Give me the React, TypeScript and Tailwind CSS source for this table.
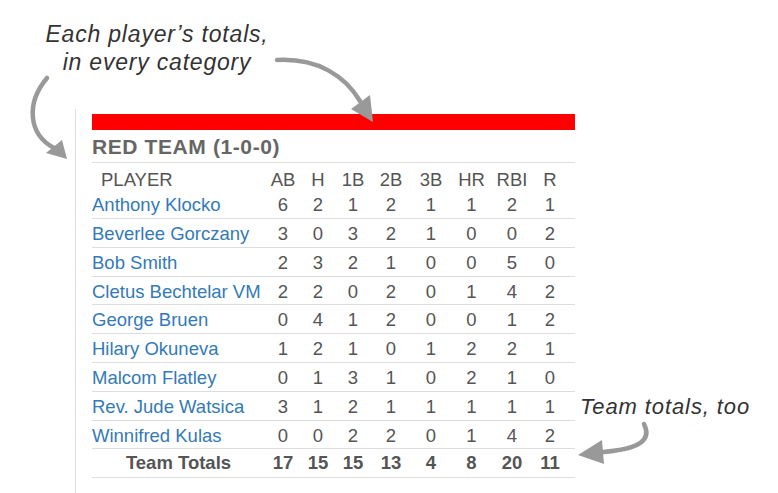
const players = [
  { name: "Anthony Klocko", stats: [6, 2, 1, 2, 1, 1, 2, 1] },
  { name: "Beverlee Gorczany", stats: [3, 0, 3, 2, 1, 0, 0, 2] },
  { name: "Bob Smith", stats: [2, 3, 2, 1, 0, 0, 5, 0] },
  { name: "Cletus Bechtelar VM", stats: [2, 2, 0, 2, 0, 1, 4, 2] },
  { name: "George Bruen", stats: [0, 4, 1, 2, 0, 0, 1, 2] },
  { name: "Hilary Okuneva", stats: [1, 2, 1, 0, 1, 2, 2, 1] },
  { name: "Malcom Flatley", stats: [0, 1, 3, 1, 0, 2, 1, 0] },
  { name: "Rev. Jude Watsica", stats: [3, 1, 2, 1, 1, 1, 1, 1] },
  { name: "Winnifred Kulas", stats: [0, 0, 2, 2, 0, 1, 4, 2] },
];

const columns = ["AB", "H", "1B", "2B", "3B", "HR", "RBI", "R"];
const totals = [17, 15, 15, 13, 4, 8, 20, 11];

const grid =
  "grid grid-cols-[173px_36px_34px_36px_40px_40px_41px_40px_36px_1fr] items-center";

function Arrows() {
  return (
    <svg
      className="absolute inset-0 pointer-events-none"
      width="778"
      height="493"
      viewBox="0 0 778 493"
    >
      <g fill="none" stroke="#999" strokeWidth="4.5" strokeLinecap="round">
        <path d="M47,78 C26,103 28,134 54,148" />
        <path d="M277,60 C318,58 345,76 360,101" />
        <path d="M644,424 C652,440 640,449 603,452" />
      </g>
      <g fill="#999">
        <polygon points="67,159 46,153 62,140" />
        <polygon points="373,122 351,109 370,95" />
        <polygon points="578,455 602,440 604,464" />
      </g>
    </svg>
  );
}

export default function App() {
  return (
    <div className="relative w-[778px] h-[493px] overflow-hidden bg-white font-['Liberation_Sans',Arial,sans-serif]">
      <div className="pt-[20px] ml-[27px] w-[260px] text-center italic text-[23px] leading-[28px] tracking-[0.8px] text-[#333]">
        Each player’s totals,
        <br />
        in every category
      </div>

      <div className="mt-[33px] ml-[75px] h-[400px] border-l border-[#ddd] pl-[16px]">
        <div className="w-[483px] pt-[5px]">
          <div className="h-[15.5px] bg-[#ff0000]" />
          <div className="h-[33px] flex items-center pt-[2px] border-b border-[#ddd] text-[21px] font-bold tracking-[0.6px] text-[#666]">
            RED TEAM (1-0-0)
          </div>

          <div className="text-[18.5px] text-[#555]">
            <div className={`${grid} h-[27.7px] pt-[3px]`}>
              <div className="pl-[9px]">PLAYER</div>
              {columns.map((c) => (
                <div key={c} className="text-center">
                  {c}
                </div>
              ))}
            </div>

            {players.map((p) => (
              <div
                key={p.name}
                className={`${grid} h-[28.8px] border-b border-[#ddd] pt-[1px]`}
              >
                <div className="text-[#337ab7] whitespace-nowrap">{p.name}</div>
                {p.stats.map((s, i) => (
                  <div key={i} className="text-center">
                    {s}
                  </div>
                ))}
              </div>
            ))}

            <div className={`${grid} h-[29px] border-b border-[#ddd] font-bold`}>
              <div className="text-center">Team Totals</div>
              {totals.map((t, i) => (
                <div key={i} className="text-center">
                  {t}
                </div>
              ))}
            </div>
          </div>
        </div>
      </div>

      <div className="absolute left-[580px] top-[393px] italic text-[22px] leading-[28px] tracking-[0.9px] text-[#333] whitespace-nowrap">
        Team totals, too
      </div>

      <Arrows />
    </div>
  );
}
